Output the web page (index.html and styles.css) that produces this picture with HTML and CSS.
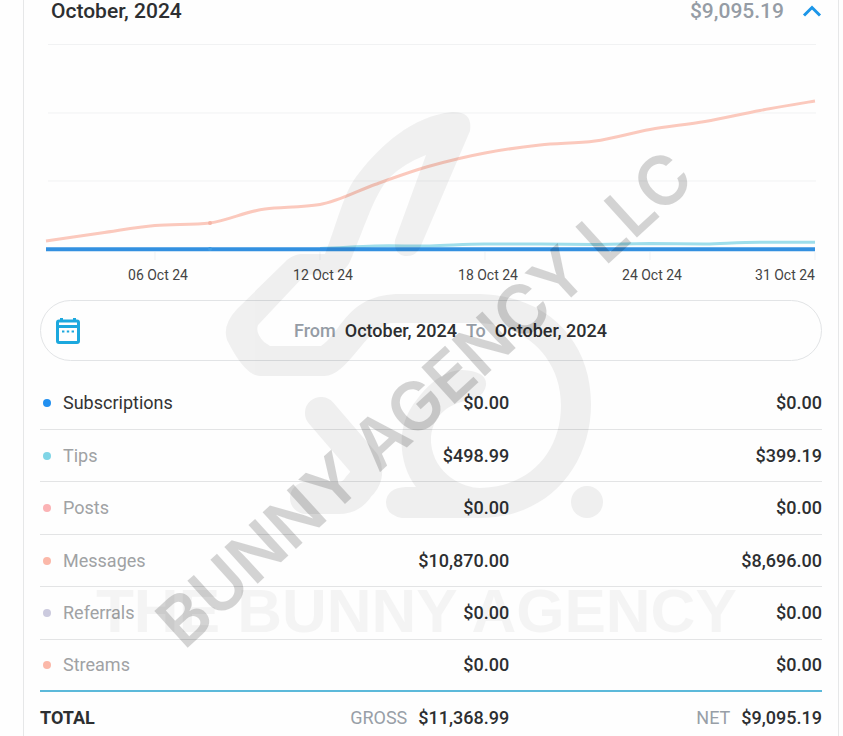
FILE: index.html
```html
<!DOCTYPE html>
<html lang="en">
<head>
<meta charset="utf-8">
<meta name="viewport" content="width=device-width, initial-scale=1">
<title>Earnings</title>
<link rel="stylesheet" href="styles.css">
</head>
<body>
<main class="card">
  <button class="month" type="button" aria-expanded="true">
    <span class="month-name">October, 2024</span>
    <span class="month-total">$9,095.19</span>
    <svg class="chevron" viewBox="0 0 20 14" aria-hidden="true"><path d="M2 11.5 10 3.500 18 11.5"/></svg>
  </button>

  <svg class="chart" viewBox="40 24 782 268" role="img" aria-label="Earnings by day">
    <path class="grid" d="M48 44.500H816M48 113H816M48 181H816"/>
    <path class="grid" d="M155 252V260M320 252V260M485 252V260M650 252V260M815 252V260"/>
    <path class="line messages" d="M46 241C64 238.400 83 235.500 101 233C119 230.500 137 227 155 225.500C173 224 192 225 210 223C228 220.500 247 211 265 209C283 207 302 207.500 320 204.500C338 201.500 357 191 375 184.500C393 178 412 171 430 166C448 161 467 156.400 485 153C503 149.600 522 147 540 145C558 143 577 143.500 595 141C613 138.500 632 132.700 650 129.500C668 126.300 687 124.600 705 121.500C723 118.400 742 113.900 760 110.500C778 107.100 797 104 815 101"/>
    <path class="line tips" d="M320 248.500C340 248 355 246.500 375 246C400 245.500 410 246.500 430 246C450 245.500 465 244 485 244H540L595 244.500L650 243.500L705 244C725 243.500 740 242.300 760 242.300H815"/>
    <path class="line subs" d="M46 249.200H815"/>
    <circle class="dot-messages" cx="210" cy="223" r="2"/>
    <circle class="dot-subs" cx="210" cy="249" r="2"/>
    <g class="axis">
      <text x="158" y="280">06 Oct 24</text>
      <text x="323" y="280">12 Oct 24</text>
      <text x="488" y="280">18 Oct 24</text>
      <text x="652" y="280">24 Oct 24</text>
      <text class="last" x="815" y="280">31 Oct 24</text>
    </g>
  </svg>

  <button class="range" type="button">
    <svg class="calendar" viewBox="0 0 24 28" aria-hidden="true">
      <path d="M1.500 5.500Q1.500 4 3 4H21Q22.500 4 22.500 5.500V24Q22.500 25.500 21 25.500H3Q1.500 25.500 1.500 24ZM1.500 9.500H22.500M5.500 1V4M18.500 1V4"/>
      <path class="days" d="M6 14.500H8.400M10.800 14.500H13.200M15.600 14.500H18"/>
    </svg>
    <span class="period">
      <span class="muted">From</span>
      <span>October, 2024</span>
      <span class="muted">To</span>
      <span>October, 2024</span>
    </span>
  </button>

  <table class="earnings">
    <tbody>
      <tr class="active"><th scope="row"><i class="dot blue"></i>Subscriptions</th><td>$0.00</td><td>$0.00</td></tr>
      <tr><th scope="row"><i class="dot cyan"></i>Tips</th><td>$498.99</td><td>$399.19</td></tr>
      <tr><th scope="row"><i class="dot pink"></i>Posts</th><td>$0.00</td><td>$0.00</td></tr>
      <tr><th scope="row"><i class="dot salmon"></i>Messages</th><td>$10,870.00</td><td>$8,696.00</td></tr>
      <tr><th scope="row"><i class="dot lilac"></i>Referrals</th><td>$0.00</td><td>$0.00</td></tr>
      <tr><th scope="row"><i class="dot salmon"></i>Streams</th><td>$0.00</td><td>$0.00</td></tr>
    </tbody>
    <tfoot>
      <tr><th scope="row">TOTAL</th><td><span class="kind">GROSS</span>$11,368.99</td><td><span class="kind">NET</span>$9,095.19</td></tr>
    </tfoot>
  </table>
</main>

<svg class="watermark" viewBox="0 0 843 736" aria-hidden="true">
  <g class="rabbit">
    <path class="fill" fill-rule="evenodd" d="M325 254C337 224 344 190 359 173C380 146 412 116 452 112Q473 111 470 131L420 248Q415 257 405 256Q393 254 395 240L426 155Q403 164 389 178C374 195 366 224 351 259Q347 271 336 273L305 275L258 325Q255 333 264 342L270 346H321C342 333 346 294 401 294H480C550 296 591 343 591 404C591 467 547 518 480 518H402Q386 515 386 502Q387 488 406 487L416 487C400 466 396 432 411 408C425 387 441 371 462 370Q487 371 486 385Q484 397 470 400C444 404 430 420 431 443C434 475 464 488 480 488C530 487 561 452 561 405C561 357 523 323 477 323H390C363 331 348 376 324 376H260Q245 376 227 340Q222 325 237 309L284 263Q290 256 300 254Z"/>
    <path class="ear" d="M321 413 364 463Q370 476 359 486Q352 498 338 498H306"/>
    <circle class="fill" cx="587" cy="502" r="16"/>
  </g>
  <text class="brand" x="96" y="632">THE BUNNY AGENCY</text>
  <text class="diagonal" transform="translate(184 651) rotate(-42.4)">BUNNY AGENCY LLC</text>
</svg>
</body>
</html>
```

FILE: styles.css
```css
* {
  box-sizing: border-box;
}

body {
  position: relative;
  margin: 0;
  background: #fefefe;
  color: #2d2f31;
  font: 500 18px/22px Roboto, "Liberation Sans", sans-serif;
}

button {
  display: flex;
  align-items: center;
  width: 100%;
  padding: 0;
  border: 0;
  background: none;
  color: inherit;
  font: inherit;
}

.card {
  margin: 0 4px 0 23px;
  padding: 0 16px;
  border: solid #e6e7e8;
  border-width: 0 1px;
}

.month {
  height: 24px;
  padding: 0 0 3px 11px;
  font-size: 21px;
}

.month-total {
  margin-left: auto;
  color: #959ca5;
}

.chevron {
  width: 20px;
  height: 14px;
  margin-left: 18px;
  fill: none;
  stroke: #1c96e8;
  stroke-width: 3;
}

.chart {
  display: block;
  width: 100%;
  overflow: visible;
}

.grid {
  stroke: #f1f2f3;
}

.line {
  fill: none;
  stroke-width: 3;
}

.messages {
  stroke: #fbc9bd;
}

.tips {
  stroke: #9edeeb;
}

.subs {
  stroke: #3390e0;
  stroke-width: 4;
}

.dot-messages {
  fill: #f5b5a6;
}

.dot-subs {
  fill: #3f9be2;
}

.axis {
  fill: #444;
  font-size: 14px;
  font-weight: 400;
  text-anchor: middle;
}

.axis .last {
  text-anchor: end;
}

.range {
  height: 61px;
  margin: 8px 0 16px;
  padding-left: 15px;
  border: 1px solid #e2e4e6;
  border-radius: 31px;
}

.calendar {
  width: 24px;
  height: 28px;
  fill: none;
  stroke: #1ca8de;
  stroke-width: 3;
}

.calendar .days {
  stroke-width: 2;
}

.period {
  display: flex;
  flex: 1;
  gap: 9px;
  justify-content: center;
}

.muted {
  color: #959ca5;
}

.earnings {
  width: 100%;
  border-collapse: separate;
  border-spacing: 0;
  table-layout: fixed;
}

th,
td {
  width: 30%;
  padding: 0;
  text-align: right;
}

td:last-child {
  width: 40%;
}

th {
  text-align: left;
}

tbody tr {
  height: 52px;
}

tbody tr:nth-child(odd) {
  height: 53px;
}

tbody th,
tbody td {
  border-bottom: 1px solid #e3e4e5;
}

tbody th {
  color: #a0a2a4;
  font-weight: 400;
}

tbody .active th {
  color: #333;
}

tbody tr:last-child > * {
  border-bottom: 2px solid #5cb9da;
}

tfoot th,
tfoot td {
  padding: 15px 0 7px;
}

.kind {
  margin-right: 11px;
  color: #989fa7;
  font-weight: 400;
}

.dot {
  display: inline-block;
  width: 8px;
  height: 8px;
  margin: 0 12px 0 3px;
  border-radius: 50%;
  vertical-align: 2px;
}

.blue {
  background: #2290f0;
}

.cyan {
  background: #80d5e6;
}

.pink {
  background: #fbb3b5;
}

.salmon {
  background: #fbb8a9;
}

.lilac {
  background: #cbcade;
}

.watermark {
  position: absolute;
  top: 0;
  left: 0;
  width: 100%;
  pointer-events: none;
}

.rabbit {
  opacity: 0.055;
}

.ear {
  fill: none;
  stroke: #000;
  stroke-width: 32;
  stroke-linecap: round;
  stroke-linejoin: round;
}

.brand {
  font: 700 62px "Liberation Sans", sans-serif;
  opacity: 0.035;
}

.diagonal {
  font: 600 68px Inter, sans-serif;
  opacity: 0.165;
}
```
